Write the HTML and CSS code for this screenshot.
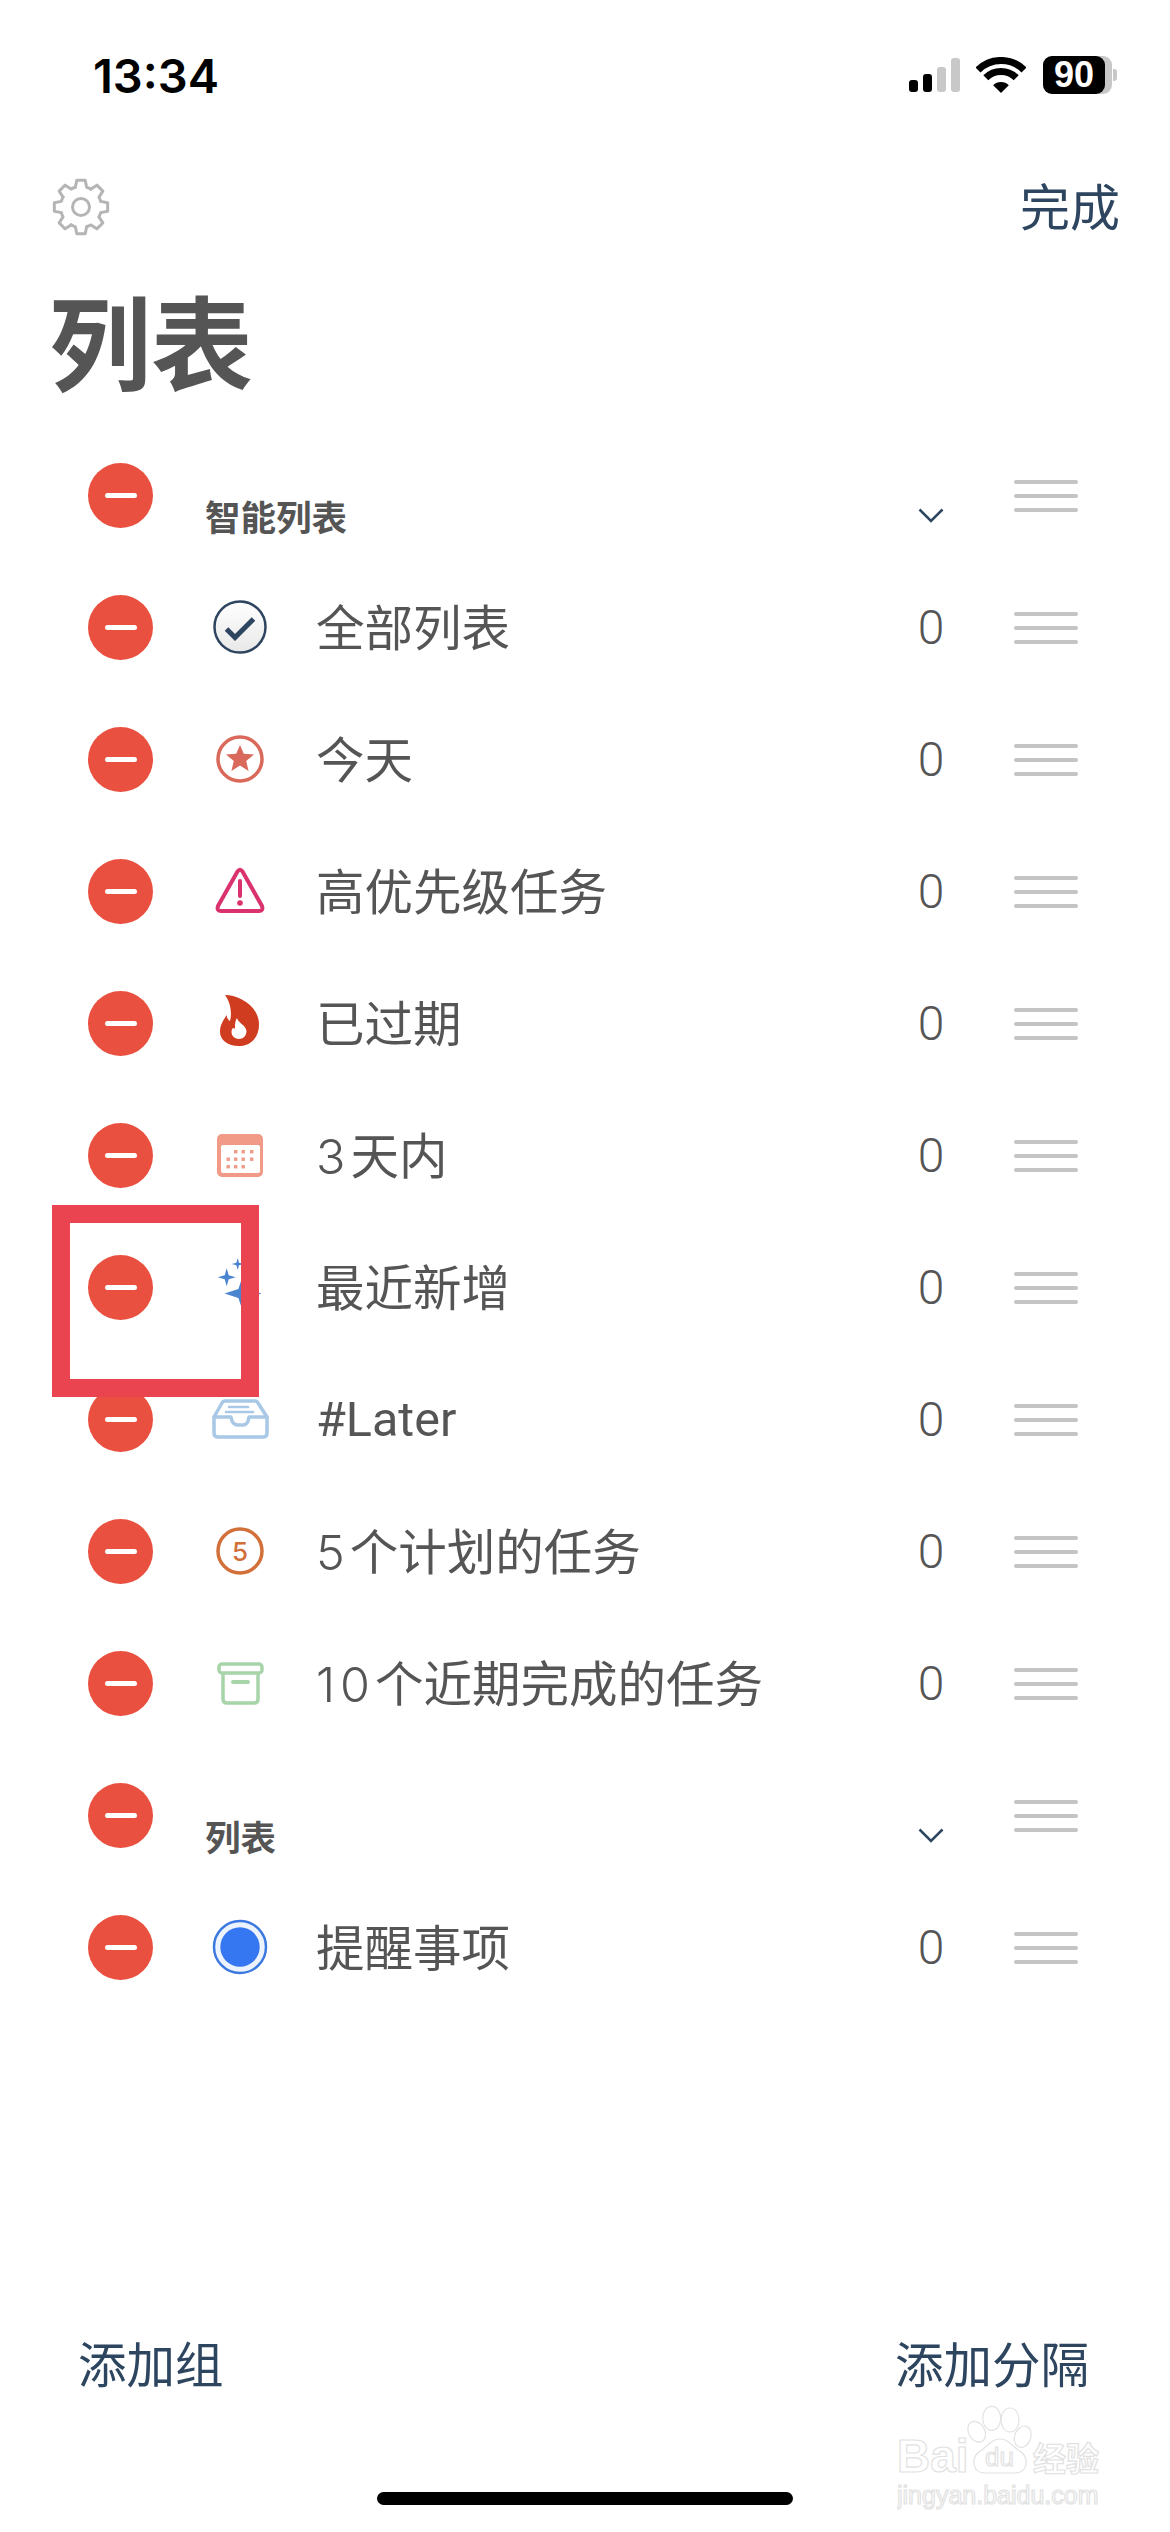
FILE: index.html
```html
<!DOCTYPE html>
<html lang="zh-CN">

<head>
  <meta charset="UTF-8">
  <meta name="viewport" content="width=device-width, initial-scale=1.0">
  <title>列表</title>
  <link rel="stylesheet" href="styles.css">
</head>

<body>
  <div class="screen">
    <div class="status">
      <span class="status__time">13:34</span>
      <svg class="status__signal" width="51" height="34" viewBox="0 0 51 34">
        <rect x="0" y="22" width="9" height="12" rx="3" fill="#000"/>
        <rect x="14" y="16" width="9" height="18" rx="3" fill="#000"/>
        <rect x="28" y="9" width="9" height="25" rx="3" fill="#c8c8c8"/>
        <rect x="42" y="0" width="9" height="34" rx="3" fill="#c8c8c8"/>
      </svg>
      <svg class="status__wifi" width="50" height="36" viewBox="0 0 50 36">
        <path d="M2 13A32.5 32.5 0 0 1 48 13" fill="none" stroke="#000" stroke-width="7"/>
        <path d="M9.8 20.8A21.5 21.5 0 0 1 40.2 20.8" fill="none" stroke="#000" stroke-width="7"/>
        <path d="M25 36L17.2 28.2A11 11 0 0 1 32.8 28.2Z" fill="#000"/>
      </svg>
      <div class="battery"><span class="battery__level">90</span></div>
    </div>

    <div class="topbar">
      <svg class="topbar__gear" width="58" height="58" viewBox="-29 -29 58 58">
        <defs>
          <path id="gear-tooth" d="M-5.65 -19.7L-4.22 -26.67L4.22 -26.67L5.65 -19.7A20.5 20.5 0 0 1 9.94 -17.93"/>
        </defs>
        <g fill="none" stroke="#b5b5b5" stroke-width="3" stroke-linejoin="round" stroke-linecap="round">
          <use href="#gear-tooth"/>
          <use href="#gear-tooth" transform="rotate(45)"/>
          <use href="#gear-tooth" transform="rotate(90)"/>
          <use href="#gear-tooth" transform="rotate(135)"/>
          <use href="#gear-tooth" transform="rotate(180)"/>
          <use href="#gear-tooth" transform="rotate(225)"/>
          <use href="#gear-tooth" transform="rotate(270)"/>
          <use href="#gear-tooth" transform="rotate(315)"/>
          <circle r="8.5"/>
        </g>
      </svg>
      <span class="topbar__done">完成</span>
    </div>

    <h1 class="title">列表</h1>

    <ul class="list">
      <li class="row row--head">
        <span class="minus"></span>
        <span class="row__head-label">智能列表</span>
        <span class="row__count">
          <svg width="26" height="15" viewBox="0 0 26 15"><path d="M1.5 1.5L13 13L24.5 1.5" fill="none" stroke="#2e4560" stroke-width="2.5"/></svg>
        </span>
        <span class="handle"><i></i><i></i><i></i></span>
      </li>

      <li class="row">
        <span class="minus"></span>
        <svg class="row__icon" width="64" height="64" viewBox="0 0 64 64">
          <defs>
            <linearGradient id="check-bg" x1="0" y1="0" x2="0" y2="1">
              <stop offset="0" stop-color="#fff"/>
              <stop offset="1" stop-color="#e8e8e8"/>
            </linearGradient>
          </defs>
          <circle cx="32" cy="32" r="25.5" fill="url(#check-bg)" stroke="#2e4560" stroke-width="2.5"/>
          <path d="M18.5 34L27 42.5L45.5 24" fill="none" stroke="#2e4560" stroke-width="5"/>
        </svg>
        <span class="row__label">全部列表</span>
        <span class="row__count">0</span>
        <span class="handle"><i></i><i></i><i></i></span>
      </li>

      <li class="row">
        <span class="minus"></span>
        <svg class="row__icon" width="64" height="64" viewBox="0 0 64 64">
          <circle cx="32" cy="32" r="22" fill="none" stroke="#d9695a" stroke-width="3.5"/>
          <path d="M32 18L35.8 26.7L46 27.6L38.2 34L40.6 44L32 38.5L23.4 44L25.8 34L18 27.6L28.2 26.7Z" fill="#d9695a"/>
        </svg>
        <span class="row__label">今天</span>
        <span class="row__count">0</span>
        <span class="handle"><i></i><i></i><i></i></span>
      </li>

      <li class="row">
        <span class="minus"></span>
        <svg class="row__icon" width="64" height="64" viewBox="0 0 64 64">
          <path d="M29.5 12.5Q32 9 34.5 12.5L54 47Q55.5 52 51 52H13Q8.5 52 10 47Z" fill="none" stroke="#d9326e" stroke-width="4" stroke-linejoin="round"/>
          <path d="M32 22V37" fill="none" stroke="#d9326e" stroke-width="4" stroke-linecap="round"/>
          <circle cx="32" cy="44" r="2.8" fill="#d9326e"/>
        </svg>
        <span class="row__label">高优先级任务</span>
        <span class="row__count">0</span>
        <span class="handle"><i></i><i></i><i></i></span>
      </li>

      <li class="row">
        <span class="minus"></span>
        <svg class="row__icon" width="64" height="64" viewBox="0 0 64 64">
          <path d="M17 4C30 4 51 14 51 34C51 47 42 55 31 55C20 55 12 49 12 41C12 33 16 29 18.5 24C19 27 20 29 22 30C24 23 23 12 17 4Z" fill="#d03c1f"/>
          <path d="M29 27C30 32 38 34 38.5 40C38.5 45 35 48 31 48C27 48 23.5 45 23.5 41C23.5 37 26 36 27 38C27 33 27 30 29 27Z" fill="#fff"/>
        </svg>
        <span class="row__label">已过期</span>
        <span class="row__count">0</span>
        <span class="handle"><i></i><i></i><i></i></span>
      </li>

      <li class="row">
        <span class="minus"></span>
        <svg class="row__icon" width="64" height="64" viewBox="0 0 64 64">
          <rect x="9" y="11" width="46" height="43" rx="5" fill="#f09a87"/>
          <rect x="13" y="22" width="39" height="28" rx="2" fill="#fff"/>
          <g fill="#f09a87">
            <rect x="26" y="27" width="3.4" height="3.4"/>
            <rect x="33.5" y="27" width="3.4" height="3.4"/>
            <rect x="42" y="27" width="3.4" height="3.4"/>
            <rect x="18.5" y="34.5" width="3.4" height="3.4"/>
            <rect x="26" y="34.5" width="3.4" height="3.4"/>
            <rect x="33.5" y="34.5" width="3.4" height="3.4"/>
            <rect x="42" y="34.5" width="3.4" height="3.4"/>
            <rect x="18.5" y="42" width="3.4" height="3.4"/>
            <rect x="26" y="42" width="3.4" height="3.4"/>
            <rect x="33.5" y="42" width="3.4" height="3.4"/>
          </g>
        </svg>
        <span class="row__label"><span class="row__num">3</span>天内</span>
        <span class="row__count">0</span>
        <span class="handle"><i></i><i></i><i></i></span>
      </li>

      <li class="row">
        <span class="minus"></span>
        <svg class="row__icon" width="64" height="64" viewBox="0 0 64 64">
          <g fill="#4b85d0">
            <path d="M18.7 13.3L20.7 20.3L27.7 22.3L20.7 24.3L18.7 31.3L16.7 24.3L9.7 22.3L16.7 20.3Z"/>
            <path d="M29.7 3L31 7.7L35.7 9L31 10.3L29.7 15L28.4 10.3L23.7 9L28.4 7.7Z"/>
            <path d="M35 20L39.6 33.9L53.5 38.5L39.6 43.1L35 57L30.4 43.1L16.5 38.5L30.4 33.9Z"/>
          </g>
        </svg>
        <span class="row__label">最近新增</span>
        <span class="row__count">0</span>
        <span class="handle"><i></i><i></i><i></i></span>
      </li>

      <li class="row">
        <span class="minus"></span>
        <svg class="row__icon" width="64" height="64" viewBox="0 0 64 64">
          <g fill="none" stroke="#a8c8e6" stroke-width="3.5" stroke-linejoin="round" stroke-linecap="round">
            <path d="M17 14H47Q49 14 50 16L59 30V46Q59 50 55 50H10Q6 50 6 46V30L14 16Q15 14 17 14Z"/>
            <path d="M6 30H23Q24 38 30 38H35Q40 38 41 30H59"/>
          </g>
          <g fill="none" stroke="#a8c8e6" stroke-width="2.5" stroke-linecap="round">
            <path d="M21 20H40"/>
            <path d="M18 25H45"/>
          </g>
        </svg>
        <span class="row__label row__label--latin">#Later</span>
        <span class="row__count">0</span>
        <span class="handle"><i></i><i></i><i></i></span>
      </li>

      <li class="row">
        <span class="minus"></span>
        <svg class="row__icon" width="64" height="64" viewBox="0 0 64 64">
          <circle cx="32" cy="32" r="22" fill="none" stroke="#d2703a" stroke-width="3.5"/>
          <text class="row__icon-text" x="32" y="41.5" text-anchor="middle">5</text>
        </svg>
        <span class="row__label"><span class="row__num">5</span>个计划的任务</span>
        <span class="row__count">0</span>
        <span class="handle"><i></i><i></i><i></i></span>
      </li>

      <li class="row">
        <span class="minus"></span>
        <svg class="row__icon" width="64" height="64" viewBox="0 0 64 64">
          <g fill="none" stroke="#a8d4aa" stroke-width="3.5" stroke-linejoin="round">
            <rect x="11" y="13" width="43" height="9" rx="3"/>
            <path d="M15 22V48Q15 52 19 52H46Q50 52 50 48V22"/>
          </g>
          <path d="M25 31H40" fill="none" stroke="#a8d4aa" stroke-width="4" stroke-linecap="round"/>
        </svg>
        <span class="row__label"><span class="row__num">10</span>个近期完成的任务</span>
        <span class="row__count">0</span>
        <span class="handle"><i></i><i></i><i></i></span>
      </li>

      <li class="row row--head">
        <span class="minus"></span>
        <span class="row__head-label">列表</span>
        <span class="row__count">
          <svg width="26" height="15" viewBox="0 0 26 15"><path d="M1.5 1.5L13 13L24.5 1.5" fill="none" stroke="#2e4560" stroke-width="2.5"/></svg>
        </span>
        <span class="handle"><i></i><i></i><i></i></span>
      </li>

      <li class="row">
        <span class="minus"></span>
        <svg class="row__icon" width="64" height="64" viewBox="0 0 64 64">
          <circle cx="32" cy="32" r="26" fill="#edf3fd" stroke="#3b78e0" stroke-width="2.5"/>
          <circle cx="32" cy="32" r="19.7" fill="#3577f0"/>
        </svg>
        <span class="row__label">提醒事项</span>
        <span class="row__count">0</span>
        <span class="handle"><i></i><i></i><i></i></span>
      </li>
    </ul>

    <div class="footer">
      <span>添加组</span>
      <span>添加分隔</span>
    </div>

    <div class="home"><span class="home__bar"></span></div>

    <div class="marker"></div>

    <svg class="watermark" width="225" height="120" viewBox="0 0 225 120">
      <g fill="#fff" stroke="#e2e2e2" stroke-width="1.2">
        <ellipse cx="94.7" cy="18.3" rx="9" ry="12"/>
        <ellipse cx="113" cy="20" rx="9" ry="12"/>
        <ellipse cx="79.7" cy="31.7" rx="8" ry="11" transform="rotate(-30 79.7 31.7)"/>
        <ellipse cx="125.7" cy="36.7" rx="8" ry="11" transform="rotate(20 125.7 36.7)"/>
        <path d="M103 39C112 39 116 47 124 52C132 58 131 73 118 73H88C75 73 74 58 82 52C90 47 94 39 103 39Z"/>
        <text class="watermark__bai" x="0" y="72">Bai</text>
        <text class="watermark__du" x="88" y="66">du</text>
        <text class="watermark__cn" x="136" y="71">经验</text>
        <text class="watermark__url" x="0" y="104">jingyan.baidu.com</text>
      </g>
    </svg>
  </div>
</body>

</html>
```

FILE: styles.css
```css
* {
  box-sizing: border-box;
}

body {
  margin: 0;
  background-color: #fff;
  font-family: Roboto, "Noto Sans CJK SC", sans-serif;
  color: #555;
}

.screen {
  position: relative;
  display: flex;
  flex-direction: column;
  width: 1170px;
  height: 2532px;
  overflow: hidden;
  background-color: #fff;
}

.status {
  display: flex;
  align-items: center;
  height: 150px;
  padding: 0 58px 0 93px;
  color: #000;
}

.status__time {
  margin-right: auto;
  font-family: Inter, sans-serif;
  font-size: 47px;
  font-weight: 600;
}

.status__wifi {
  margin-left: 16px;
}

.battery {
  position: relative;
  width: 69px;
  height: 38px;
  margin-left: 17px;
  border-radius: 9px;
  background-color: #c8c8c8;
}

.battery::after {
  content: "";
  position: absolute;
  top: 13px;
  right: -5px;
  width: 4px;
  height: 12px;
  border-radius: 0 3px 3px 0;
  background-color: #c8c8c8;
}

.battery__level {
  display: block;
  width: 62px;
  height: 38px;
  border-radius: 9px;
  background-color: #000;
  color: #fff;
  font-family: "Liberation Sans", sans-serif;
  font-size: 36px;
  font-weight: 700;
  line-height: 38px;
  text-align: center;
}

.topbar {
  display: flex;
  align-items: center;
  justify-content: space-between;
  height: 114px;
  padding: 0 50px 0 52px;
}

.topbar__done {
  margin-top: 3px;
  color: #2e4560;
  font-size: 50px;
  line-height: 1;
}

.title {
  height: 165px;
  margin: 0;
  padding-top: 12px;
  padding-left: 49px;
  font-size: 102px;
  font-weight: 700;
  line-height: 144px;
}

.list {
  margin: 0;
  padding: 0;
  list-style: none;
}

.row {
  display: flex;
  align-items: center;
  height: 132px;
  padding: 0 92px 0 88px;
}

.minus {
  display: flex;
  flex-shrink: 0;
  align-items: center;
  justify-content: center;
  width: 65px;
  height: 65px;
  border-radius: 50%;
  background-color: #ea503f;
}

.minus::after {
  content: "";
  width: 32px;
  height: 5px;
  border-radius: 3px;
  background-color: #fff;
}

.row__icon {
  flex-shrink: 0;
  margin-left: 55px;
}

.row__label {
  flex-grow: 1;
  margin-bottom: 5px;
  margin-left: 44px;
  font-size: 48.5px;
  font-weight: 400;
  white-space: nowrap;
}

.row__label--latin {
  margin-bottom: 0;
}

.row__num {
  font-family: Inter, sans-serif;
  font-weight: 300;
  letter-spacing: 5px;
}

.row__head-label {
  flex-grow: 1;
  margin-left: 52px;
  padding-top: 41px;
  font-size: 35.5px;
  font-weight: 600;
}

.row__count {
  width: 60px;
  font-size: 48px;
  font-weight: 300;
  text-align: center;
}

.row--head .row__count {
  display: flex;
  justify-content: center;
  padding-top: 41px;
}

.row__icon-text {
  fill: #d2703a;
  font-family: Inter, sans-serif;
  font-size: 26px;
  font-weight: 500;
}

.handle {
  display: flex;
  flex-direction: column;
  gap: 10px;
  width: 64px;
  margin-top: 2px;
  margin-left: 53px;
}

.handle i {
  height: 4px;
  border-radius: 2px;
  background-color: #c4c4c4;
}

.footer {
  display: flex;
  justify-content: space-between;
  height: 100px;
  margin-top: auto;
  padding: 0 81px 0 78px;
  color: #2e4560;
  font-size: 48.5px;
  line-height: 106px;
}

.home {
  display: flex;
  justify-content: center;
  height: 118px;
  padding-top: 78px;
}

.home__bar {
  width: 416px;
  height: 13px;
  border-radius: 7px;
  background-color: #000;
}

.marker {
  position: absolute;
  top: 1205px;
  left: 52px;
  width: 207px;
  height: 192px;
  border: 18px solid #e9444f;
}

.watermark {
  position: absolute;
  top: 2400px;
  left: 897px;
}

.watermark__bai {
  font-family: "Liberation Sans", sans-serif;
  font-size: 46px;
  font-weight: 700;
}

.watermark__du {
  font-family: "Liberation Sans", sans-serif;
  font-size: 26px;
}

.watermark__cn {
  font-family: "Noto Sans CJK SC", sans-serif;
  font-size: 33px;
  font-weight: 700;
}

.watermark__url {
  font-family: "Liberation Sans", sans-serif;
  font-size: 25px;
}
```
